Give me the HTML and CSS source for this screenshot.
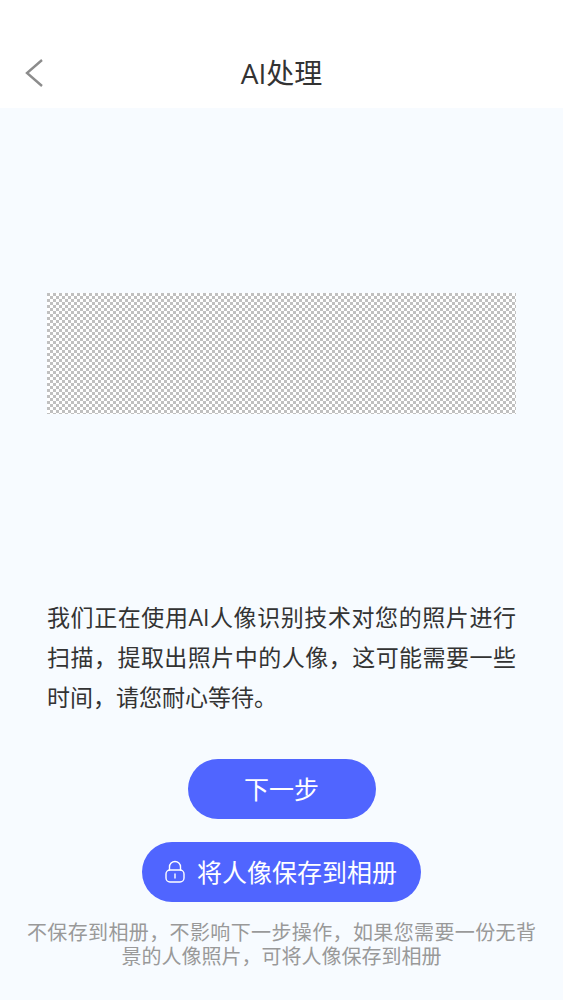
FILE: index.html
```html
<!DOCTYPE html>
<html lang="zh-CN">
<head>
<meta charset="utf-8">
<meta name="viewport" content="width=device-width, initial-scale=1">
<title>AI处理</title>
<link rel="stylesheet" href="styles.css">
</head>
<body>
<header class="topbar">
  <button class="back" type="button" aria-label="返回">
    <svg class="back-icon" viewBox="0 0 18 28" aria-hidden="true"><path d="M17 1 2 14 17 27"/></svg>
  </button>
  <h1 class="title">AI处理</h1>
</header>
<main class="page">
  <div class="stage">
    <div class="preview" role="img" aria-label="人像预览"></div>
  </div>
  <p class="message">我们正在使用AI人像识别技术对您的照片进行扫描，提取出照片中的人像，这可能需要一些时间，请您耐心等待。</p>
  <div class="actions">
    <button class="button next" type="button">下一步</button>
    <button class="button save" type="button">
      <svg class="lock" viewBox="0 0 22 24" aria-hidden="true"><rect x="2" y="10" width="18" height="12" rx="4"/><path d="M5.500 10V7a5.500 5.500 0 0 1 11 0v3M11 14v4"/></svg>
      将人像保存到相册
    </button>
  </div>
  <p class="note">不保存到相册，不影响下一步操作，如果您需要一份无背景的人像照片，可将人像保存到相册</p>
</main>
</body>
</html>
```

FILE: styles.css
```css
* {
  box-sizing: border-box;
}

body {
  margin: 0;
  min-height: 100vh;
  display: flex;
  flex-direction: column;
  background: #f7fbff;
  color: #333;
  font-family: "Open Sans", "Noto Sans CJK SC", sans-serif;
}

.topbar {
  display: grid;
  grid-template-columns: 70px 1fr 70px;
  align-items: center;
  padding-top: 38px;
  height: 108px;
  background: #fff;
}

.back {
  display: flex;
  padding: 10px 25px;
  border: 0;
  background: none;
}

.back-icon {
  width: 18px;
  height: 28px;
  fill: none;
  stroke: #8c8c8c;
  stroke-width: 2.4;
}

.title {
  margin: 0;
  font-size: 28px;
  font-weight: 400;
  line-height: 40px;
  text-align: center;
}

.page {
  flex: 1;
  display: flex;
  flex-direction: column;
  padding-bottom: 31px;
}

.stage {
  flex: 1;
  display: flex;
  align-items: center;
  padding: 1px 47px 0;
}

.preview {
  flex: 1;
  height: 121px;
  background: conic-gradient(#fff 25%, #c0c0c0 0 50%, #fff 0 75%, #c0c0c0 0) 0 0 / 6px 6px;
}

.message {
  margin: 0;
  padding: 0 47px;
  font-size: 23px;
  line-height: 40px;
  text-align: justify;
}

.actions {
  display: flex;
  flex-direction: column;
  align-items: center;
  gap: 23px;
  padding: 42px 0 19px;
}

.button {
  display: flex;
  align-items: center;
  justify-content: center;
  height: 60px;
  border: 0;
  border-radius: 30px;
  background: #5065ff;
  color: #fff;
  font-family: inherit;
  font-size: 25px;
  line-height: 40px;
}

.next {
  width: 188px;
}

.save {
  gap: 11px;
  padding: 0 24px 0 22px;
}

.lock {
  width: 22px;
  height: 24px;
  fill: none;
  stroke: #fff;
  stroke-width: 1.4;
  stroke-linecap: round;
}

.note {
  margin: 0;
  padding: 0 27px;
  color: #999;
  font-size: 20px;
  line-height: 24px;
  text-align: justify;
  text-align-last: center;
}
```
